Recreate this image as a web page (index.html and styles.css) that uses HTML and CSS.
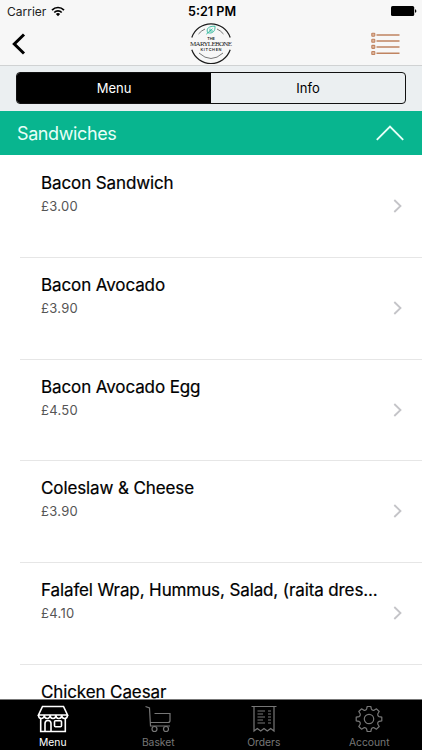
FILE: index.html
```html
<!DOCTYPE html>
<html lang="en">
<head>
  <meta charset="UTF-8" />
  <title>The Marylebone Kitchen - Menu</title>
  <meta name="viewport" content="width=device-width, initial-scale=1.0" />
  <link rel="stylesheet" href="styles.css">
</head>
<body>

<div class="app">
  <header>
    <div class="status-bar">
      <div class="carrier">
        <span>Carrier</span>
        <svg width="14" height="11" viewBox="0 0 14 11" fill="none" stroke="#000" stroke-width="1.7">
          <path d="M1 4.2C4.4.6 9.6.6 13 4.2M3.3 6.5c2-2.1 5.4-2.1 7.4 0" />
          <path d="M4.9 8a3 3 0 0 1 4.2 0L7 10.3z" fill="#000" stroke="none" />
        </svg>
      </div>
      <div class="time">5:21 PM</div>
      <svg class="battery" width="26" height="10" viewBox="0 0 26 10">
        <rect x="0" y="0" width="23.2" height="10" rx="1.6" fill="#000" />
        <path d="M24 3.2c1.8.3 1.8 3.3 0 3.6z" fill="#000" />
      </svg>
    </div>

    <nav class="nav-bar">
      <a href="#" class="back" aria-label="Back">
        <svg width="14" height="22" viewBox="0 0 14 22" fill="none" stroke="#000" stroke-width="3">
          <path d="M12 1.5 2.3 11 12 20.5" />
        </svg>
      </a>
      <svg class="logo" width="44" height="44" viewBox="0 0 44 44" fill="none">
        <g stroke="#1c1c1c" stroke-width="1.2">
          <path d="M2.8 15.5A20.3 20.3 0 0 1 41.2 15.5" />
          <path d="M2.8 27.8A20.3 20.3 0 0 0 41.2 27.8" />
        </g>
        <g stroke="#555" stroke-width=".8">
          <path d="M9.5 12Q12.500 8.500 16 7M28 7Q31.500 8.500 34.500 12" />
          <path d="M10 31Q22 42 34 31" />
        </g>
        <path d="M18.700 10.700C16.800 6.500 20 4 26 4.200c.4 4.700-2.200 7.900-7.300 6.500zm-1.400 1.500 6.200-5.500M21 9V6.600M21 9h3" stroke="#2bb89b" stroke-width=".9" />
        <text x="22" y="17.900" class="logo-small" textLength="7.500">THE</text>
        <text x="22" y="24.300" class="logo-name" textLength="42">MARYLEBONE</text>
        <text x="22" y="29.100" class="logo-small" textLength="21">KITCHEN</text>
      </svg>
      <a href="#" class="list-btn" aria-label="Categories">
        <svg width="29" height="24" viewBox="0 0 29 24" fill="none" stroke="#c08461">
          <path d="M5.500 2.900H28.500M5.500 9H28.500M5.500 15.100H28.500M5.500 21.200H28.500" stroke-width="1.500" />
          <g stroke-width="1.100" fill="#dfb59b">
            <rect x=".8" y="1.200" width="3" height="3" rx=".6" />
            <rect x=".8" y="7.300" width="3" height="3" rx=".6" />
            <rect x=".8" y="13.400" width="3" height="3" rx=".6" />
            <rect x=".8" y="19.500" width="3" height="3" rx=".6" />
          </g>
        </svg>
      </a>
    </nav>
  </header>

  <div class="segment-bar">
    <div class="segment">
      <button class="active">Menu</button>
      <button>Info</button>
    </div>
  </div>

  <div class="category">
    <h2>Sandwiches</h2>
    <svg width="28" height="16" viewBox="0 0 28 16" fill="none" stroke="#e8fff8" stroke-width="1.900">
      <path d="M.8 14.800 14 1.600 27.200 14.800" />
    </svg>
  </div>

  <main class="menu-list">
    <a href="#" class="item">
      <div class="item-text">
        <h3>Bacon Sandwich</h3>
        <p>£3.00</p>
      </div>
      <svg class="arrow" viewBox="0 0 9 14"><path d="M1.300 1 7.500 7 1.300 13" /></svg>
    </a>
    <a href="#" class="item">
      <div class="item-text">
        <h3>Bacon Avocado</h3>
        <p>£3.90</p>
      </div>
      <svg class="arrow" viewBox="0 0 9 14"><path d="M1.300 1 7.500 7 1.300 13" /></svg>
    </a>
    <a href="#" class="item">
      <div class="item-text">
        <h3>Bacon Avocado Egg</h3>
        <p>£4.50</p>
      </div>
      <svg class="arrow" viewBox="0 0 9 14"><path d="M1.300 1 7.500 7 1.300 13" /></svg>
    </a>
    <a href="#" class="item">
      <div class="item-text">
        <h3>Coleslaw &amp; Cheese</h3>
        <p>£3.90</p>
      </div>
      <svg class="arrow" viewBox="0 0 9 14"><path d="M1.300 1 7.500 7 1.300 13" /></svg>
    </a>
    <a href="#" class="item">
      <div class="item-text">
        <h3>Falafel Wrap, Hummus, Salad, (raita dres...</h3>
        <p>£4.10</p>
      </div>
      <svg class="arrow" viewBox="0 0 9 14"><path d="M1.300 1 7.500 7 1.300 13" /></svg>
    </a>
    <a href="#" class="item">
      <div class="item-text">
        <h3>Chicken Caesar</h3>
      </div>
    </a>
  </main>

  <footer class="tab-bar">
    <a href="#" class="tab active">
      <svg width="32" height="28" viewBox="0 0 32 28">
        <path d="M5.500 1.500h21L30.500 10H1.500z" />
        <path d="M1.500 10c0 4.600 5.800 4.600 5.800 0 0 4.600 5.800 4.600 5.800 0 0 4.600 5.800 4.600 5.800 0 0 4.600 5.800 4.600 5.800 0 0 4.600 5.800 4.600 5.800 0" />
        <path d="M3.700 13.500V26.500H28.300V13.500M8 26.500V18.500q0-3 3-3t3 3V26.500" />
        <rect x="17.500" y="15.700" width="7" height="6" rx="1" />
      </svg>
      <span>Menu</span>
    </a>
    <a href="#" class="tab">
      <svg width="32" height="28" viewBox="0 0 32 28">
        <path d="M3.500 1.500 7.500 3 8.500 21H28M12.500 8.500H28V15.500Q28 17.500 26 17.500H8.500" />
        <circle cx="12.500" cy="24" r="2.500" />
        <circle cx="24" cy="24" r="2.500" />
      </svg>
      <span>Basket</span>
    </a>
    <a href="#" class="tab">
      <svg width="32" height="28" viewBox="0 0 32 28">
        <path d="M3.500 1.500H28.500M6 1.500V26l3.300-2.500 3.400 2.500 3.300-2.500 3.300 2.500 3.400-2.500L26 26V1.500" />
        <path d="M9.500 6H17M9.500 9H15M9.500 12H17M9.500 15H15M9.500 18H17M20 6h3M20 9h3M20 12h3M20 15h3M20 18h3" />
      </svg>
      <span>Orders</span>
    </a>
    <a href="#" class="tab">
      <svg width="32" height="28" viewBox="0 0 32 28">
        <path d="M14.200 1.500h3.600l.6 2.500q.6 1.600 2.600 1.300l2.500-1.500 2.700 2.700-1.500 2.500q-.3 2 1.300 2.600l2.800.6v3.600l-2.800.6q-1.600.6-1.300 2.600l1.500 2.500-2.700 2.700-2.500-1.500q-2-.3-2.600 1.300l-.6 2.500h-3.600l-.6-2.500q-.6-1.600-2.600-1.300l-2.500 1.500-2.700-2.700 1.500-2.500q.3-2-1.300-2.600l-2.800-.6v-3.600l2.800-.6q1.600-.6 1.300-2.600l-1.500-2.500 2.700-2.700 2.500 1.500q2 .3 2.600-1.300z" stroke-linejoin="round" />
        <circle cx="16" cy="14" r="4.700" />
      </svg>
      <span>Account</span>
    </a>
  </footer>
</div>

</body>
</html>
```

FILE: styles.css
```css
* {
  box-sizing: border-box;
}
body {
  margin: 0;
  font-family: Inter, "Liberation Sans", sans-serif;
  background-color: #fff;
  color: #000;
}
a {
  color: inherit;
  text-decoration: none;
}
svg {
  display: block;
}
.app {
  display: flex;
  flex-direction: column;
  height: 750px;
  overflow: hidden;
}
header {
  flex: none;
  height: 66px;
  background-color: #f7f7f7;
  border-bottom: 1px solid #d0d2d3;
}
.status-bar {
  display: grid;
  grid-template-columns: 1fr auto 1fr;
  align-items: center;
  height: 22px;
  padding: 0 5px 0 7px;
}
.carrier {
  display: flex;
  align-items: center;
  gap: 5px;
  font-size: 12px;
  color: #222;
}
.time {
  font-size: 12.6px;
  font-weight: 600;
}
.battery {
  justify-self: end;
}
.nav-bar {
  display: grid;
  grid-template-columns: 1fr auto 1fr;
  align-items: center;
  height: 43px;
  padding: 0 22px 0 12px;
}
.logo {
  margin-left: 10px;
}
.logo text {
  text-anchor: middle;
  fill: #222;
}
.logo-small {
  font-size: 3.8px;
  font-weight: 600;
}
.logo-name {
  font-family: "Liberation Serif", serif;
  font-size: 7px;
}
.list-btn {
  justify-self: end;
}
.segment-bar {
  flex: none;
  height: 45px;
  padding: 6px 16px;
  background-color: #ebeff1;
}
.segment {
  display: flex;
  height: 32px;
  border: 1px solid #111;
  border-radius: 4px;
  overflow: hidden;
}
.segment button {
  flex: 1;
  padding: 0;
  border: none;
  background: none;
  font-family: inherit;
  font-size: 13px;
  color: #000;
}
.segment button.active {
  background-color: #000;
  color: #fff;
}
.category {
  flex: none;
  display: flex;
  align-items: center;
  justify-content: space-between;
  height: 44px;
  padding: 0 18px 0 17px;
  background-color: #08b58f;
}
.category h2 {
  margin: 0;
  font-size: 18px;
  font-weight: 400;
  letter-spacing: -0.4px;
  color: #e8fff8;
}
.menu-list {
  flex: 1;
  min-height: 0;
  padding-top: 1px;
  overflow: hidden;
}
.item {
  display: flex;
  justify-content: space-between;
  height: 101.8px;
  margin-left: 20px;
  padding: 15px 20px 0 21px;
  border-bottom: 1px solid #e6e6e6;
}
.item h3 {
  margin: 0;
  font-size: 17px;
  font-weight: 400;
  line-height: 24px;
  letter-spacing: -0.11px;
  white-space: nowrap;
  -webkit-text-stroke: 0.2px #000;
}
.item p {
  margin: 3px 0 0;
  font-size: 13px;
  line-height: 16px;
  letter-spacing: 0.3px;
  color: #555;
}
.arrow {
  flex: none;
  width: 9px;
  height: 14px;
  margin-top: 28px;
  fill: none;
  stroke: #c4c4c8;
  stroke-width: 1.8;
}
.tab-bar {
  flex: none;
  display: flex;
  height: 51px;
  background-color: #000;
  border-top: 1px solid #777;
}
.tab {
  flex: 1;
  display: flex;
  flex-direction: column;
  align-items: center;
  padding-top: 5px;
  font-size: 10.3px;
  line-height: 13px;
  color: #777;
}
.tab svg {
  margin-bottom: 3px;
  fill: none;
  stroke: currentColor;
  stroke-width: 1.2;
}
.tab.active {
  color: #fff;
}
.tab.active svg {
  stroke-width: 1.6;
}
```
